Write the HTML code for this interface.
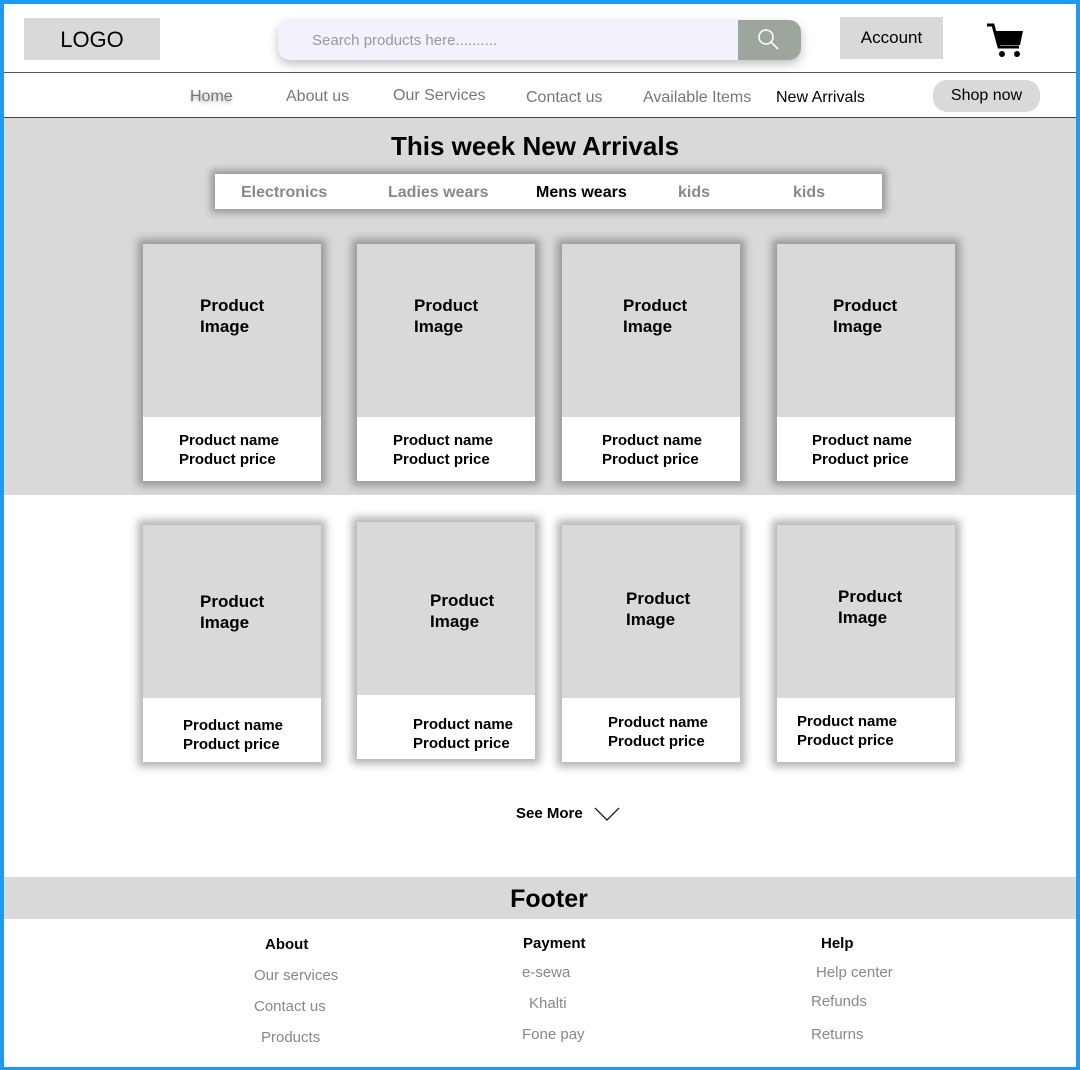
<!DOCTYPE html>
<html><head><style>
*{margin:0;padding:0;box-sizing:border-box}
body{width:1080px;height:1070px;position:relative;background:#fff;font-family:"Liberation Sans",sans-serif;overflow:hidden}
.a{position:absolute}
.frame{left:0;top:0;width:1080px;height:1070px;border:4px solid #1e9bf0;border-bottom-width:3px;z-index:10;pointer-events:none}
.nav{font-size:16px;color:#777;top:88px}
.card{width:178px;height:237px;background:#fff;box-shadow:0 0 8px 5px rgba(0,0,0,.3)}
.card .img{position:absolute;left:0;top:0;width:178px;height:173px;background:#d9d9d9}
.card .t1{position:absolute;top:51px;font-size:17px;font-weight:bold;line-height:21px}
.card .t2{position:absolute;top:187px;font-size:15px;font-weight:bold;line-height:19px}
.ft{font-size:15px;color:#888}
.fh{font-size:15px;font-weight:bold;color:#000}
</style></head><body>
<div class="a frame"></div>
<div class="a" style="left:24px;top:18px;width:136px;height:42px;background:#d9d9d9;font-size:22px;text-align:center;line-height:44px">LOGO</div>
<div class="a" style="left:278px;top:20px;width:523px;height:40px;border-radius:12px;background:#f2f2fc;box-shadow:0 4px 10px rgba(0,0,0,.25);overflow:hidden">
<span class="a" style="left:34px;top:12px;font-size:15px;color:#999">Search products here..........</span>
<div class="a" style="left:460px;top:0;width:63px;height:40px;background:#9ca69c"><svg class="a" style="left:18px;top:7px" width="26" height="26" viewBox="0 0 26 26" fill="none" stroke="#fff" stroke-width="1.6"><circle cx="10" cy="10" r="7"/><path d="M15 15l7 7"/></svg></div></div>
<div class="a" style="left:840px;top:17px;width:103px;height:42px;background:#d9d9d9;font-size:17px;text-align:center;line-height:42px">Account</div>
<svg class="a" style="left:985px;top:22px" width="40" height="38" viewBox="0 0 40 38"><path d="M2 3h6l6 22h20" fill="none" stroke="#000" stroke-width="3"/><path d="M10 9h28l-3 14H15z" fill="#000"/><circle cx="17" cy="32" r="3"/><circle cx="32" cy="32" r="3"/></svg>
<div class="a" style="left:4px;top:72px;width:1072px;height:1px;background:#555"></div>
<span class="a nav" style="left:190px;text-shadow:0 2px 3px #aaa">Home</span>
<span class="a nav" style="left:286px">About us</span>
<span class="a nav" style="left:393px;top:87px">Our Services</span>
<span class="a nav" style="left:526px;top:89px">Contact us</span>
<span class="a nav" style="left:643px;top:89px">Available Items</span>
<span class="a nav" style="left:776px;top:89px;color:#000">New Arrivals</span>
<div class="a" style="left:933px;top:80px;width:107px;height:32px;border-radius:14px;background:#d9d9d9;font-size:16px;text-align:center;line-height:32px">Shop now</div>
<div class="a" style="left:4px;top:117px;width:1072px;height:378px;background:#d9d9d9;border-top:1px solid #444"></div>
<div class="a" style="left:0;width:1070px;top:131px;text-align:center;font-size:26px;font-weight:bold">This week New Arrivals</div>
<div class="a" style="left:215px;top:174px;width:667px;height:35px;background:#fff;box-shadow:0 0 7px 4px rgba(0,0,0,.3);font-size:16px;font-weight:bold;color:#888">
<span class="a" style="left:26px;top:10px">Electronics</span><span class="a" style="left:173px;top:10px">Ladies wears</span><span class="a" style="left:321px;top:10px;color:#000">Mens wears</span><span class="a" style="left:463px;top:10px">kids</span><span class="a" style="left:578px;top:10px">kids</span></div>

<div class="a card" style="left:143px;top:244px"><div class="img"></div><div class="t1" style="left:57px">Product<br>Image</div><div class="t2" style="left:36px">Product name<br>Product price</div></div>
<div class="a card" style="left:357px;top:244px"><div class="img"></div><div class="t1" style="left:57px">Product<br>Image</div><div class="t2" style="left:36px">Product name<br>Product price</div></div>
<div class="a card" style="left:562px;top:244px"><div class="img"></div><div class="t1" style="left:61px">Product<br>Image</div><div class="t2" style="left:40px">Product name<br>Product price</div></div>
<div class="a card" style="left:777px;top:244px"><div class="img"></div><div class="t1" style="left:56px">Product<br>Image</div><div class="t2" style="left:35px">Product name<br>Product price</div></div>

<div class="a card" style="left:143px;top:525px"><div class="img"></div><div class="t1" style="left:57px;top:66px">Product<br>Image</div><div class="t2" style="left:40px;top:191px">Product name<br>Product price</div></div>
<div class="a card" style="left:357px;top:522px"><div class="img"></div><div class="t1" style="left:73px;top:68px">Product<br>Image</div><div class="t2" style="left:56px;top:193px">Product name<br>Product price</div></div>
<div class="a card" style="left:562px;top:525px"><div class="img"></div><div class="t1" style="left:64px;top:63px">Product<br>Image</div><div class="t2" style="left:46px;top:188px">Product name<br>Product price</div></div>
<div class="a card" style="left:777px;top:525px"><div class="img"></div><div class="t1" style="left:61px;top:61px">Product<br>Image</div><div class="t2" style="left:20px;top:187px">Product name<br>Product price</div></div>

<span class="a" style="left:516px;top:805px;font-size:15px;font-weight:bold">See More</span>
<svg class="a" style="left:594px;top:806px" width="26" height="16"><path d="M1 2l12 12 12-12" fill="none" stroke="#000" stroke-width="1.2"/></svg>

<div class="a" style="left:4px;top:877px;width:1072px;height:42px;background:#d9d9d9;text-align:center;font-size:25px;font-weight:bold;line-height:44px;padding-left:18px">Footer</div>
<span class="a fh" style="left:265px;top:936px">About</span>
<span class="a ft" style="left:254px;top:967px">Our services</span>
<span class="a ft" style="left:254px;top:998px">Contact us</span>
<span class="a ft" style="left:261px;top:1029px">Products</span>
<span class="a fh" style="left:523px;top:935px">Payment</span>
<span class="a ft" style="left:522px;top:964px">e-sewa</span>
<span class="a ft" style="left:529px;top:995px">Khalti</span>
<span class="a ft" style="left:522px;top:1026px">Fone pay</span>
<span class="a fh" style="left:821px;top:935px">Help</span>
<span class="a ft" style="left:816px;top:964px">Help center</span>
<span class="a ft" style="left:811px;top:993px">Refunds</span>
<span class="a ft" style="left:811px;top:1026px">Returns</span>
</body></html>
